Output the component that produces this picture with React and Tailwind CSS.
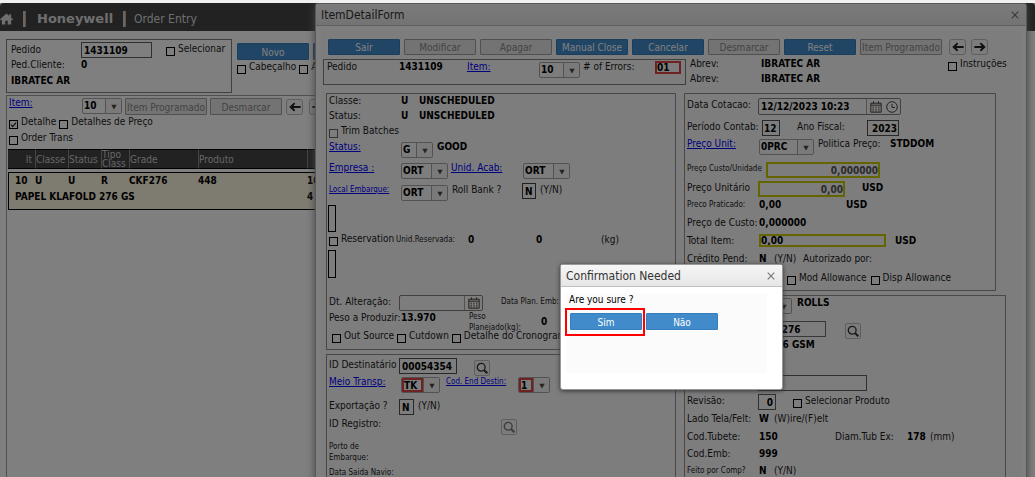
import React from "react";

function Txt({ children, bold, small, className = "" }) {
  return (
    <span className={`whitespace-nowrap leading-[14px] ${bold ? "font-bold text-black" : "text-[#1c1c1c]"} ${small ? "text-[8px]" : ""} ${className}`}>
      {children}
    </span>
  );
}

function Label({ htmlFor, children, small, className = "" }) {
  return (
    <label htmlFor={htmlFor} className={`whitespace-nowrap leading-[14px] text-[#1c1c1c] ${small ? "text-[8px]" : ""} ${className}`}>
      {children}
    </label>
  );
}

function Link({ children, small }) {
  return (
    <a href="#" className={`whitespace-nowrap leading-[14px] text-[#0000ff] underline ${small ? "text-[8px]" : ""}`}>
      {children}
    </a>
  );
}

function Check({ children, checked, disabled }) {
  return (
    <label className="flex items-start gap-[3px] whitespace-nowrap leading-[14px] text-[#1c1c1c]">
      <span className="relative mt-[5px] flex h-[9px] w-[9px] shrink-0">
        <input type="checkbox" defaultChecked={checked} disabled={disabled} className={`h-[9px] w-[9px] appearance-none border ${disabled ? "border-[#666666]" : "border-black"}`} />
        {checked && (
          <svg viewBox="0 0 9 9" className="pointer-events-none absolute inset-0 h-[9px] w-[9px]">
            <path d="M2 4.8 3.7 6.6 7 2.6" fill="none" stroke="#222" strokeWidth="1.3" />
          </svg>
        )}
      </span>
      {children}
    </label>
  );
}

function Combo({ value, label, id, className = "", error }) {
  return (
    <span className={`mt-[2px] flex h-4 overflow-hidden rounded-[2px] border border-[#a4a4a4] ${className}`}>
      <select id={id} aria-label={label} className={`min-w-0 flex-1 appearance-none font-bold leading-[12px] text-black ${error ? "border-2 border-[#e04444]" : "pl-px"}`}>
        <option>{value}</option>
      </select>
      <span className="flex w-4 shrink-0 items-center justify-center border-l border-[#a4a4a4] bg-[#f4f4f4]">
        <svg viewBox="0 0 6 6" className="mt-[2px] h-[6px] w-[6px]">
          <path d="M.3.8h5.4L3 5.6z" fill="#54483f" />
        </svg>
      </span>
    </span>
  );
}

function Field({ value, label, id, className = "" }) {
  return (
    <input id={id} aria-label={label} defaultValue={value} className={`h-4 min-w-0 border font-bold text-black ${className}`} />
  );
}

function Btn({ children, disabled, label, className = "" }) {
  return (
    <button
      disabled={disabled}
      aria-label={label}
      className={`flex w-[72px] shrink-0 items-center justify-center overflow-hidden whitespace-nowrap rounded-[1px] border pt-[2px] leading-[14px] ${disabled ? "border-[#a0a0a0] bg-[#e6e6e6] text-[#888888]" : "border-[#357ebd] bg-[#428bca] text-white"} ${className}`}
    >
      {children}
    </button>
  );
}

function ArrowBtn({ right }) {
  return (
    <button aria-label={right ? "Próximo" : "Anterior"} className="flex h-4 w-[17px] shrink-0 items-center justify-center rounded-[3px] border border-[#bcbcbc] bg-[#f8f8f8]">
      <svg viewBox="0 0 12 10" className={`h-[10px] w-3 ${right ? "rotate-180" : ""}`}>
        <path d="M.3 5 5 .6 6.2 1.8 4.4 3.9h7.2v2.2H4.4l1.8 2.1L5 9.4z" fill="#222" />
      </svg>
    </button>
  );
}

function SearchBtn({ disabled }) {
  return (
    <button aria-label="Pesquisar" disabled={disabled} className={`mt-[2px] flex h-4 w-4 items-center justify-center rounded-[2px] border border-[#bcbcbc] bg-[#f6f6f6] ${disabled ? "text-[#777777]" : "text-[#333333]"}`}>
      <svg viewBox="0 0 12 12" className="h-3 w-3 shrink-0">
        <circle cx="5.2" cy="5.2" r="3.9" fill="none" stroke="currentColor" strokeWidth="1.3" />
        <path d="m8 8 3.3 3.3" stroke="currentColor" strokeWidth="2" />
      </svg>
    </button>
  );
}

function CalendarIcon() {
  return (
    <svg viewBox="0 0 12 12" className="h-3 w-3 shrink-0" fill="none" stroke="#4d443e">
      <path d="M.8 2.2h10.4v9H.8zM1 4.2h10M3.5.4v2.4M8.5.4v2.4" />
      <path d="M2.5 6.2h7M2.5 8.2h7M2.5 10h7" strokeDasharray="1.4 1.4" />
    </svg>
  );
}

function ClockIcon() {
  return (
    <svg viewBox="0 0 12 12" className="h-3 w-3 shrink-0" fill="none" stroke="#4d443e">
      <circle cx="6" cy="6" r="5.3" />
      <path d="M6 3v3.5h3" />
    </svg>
  );
}

const panel = "border border-[#909090]";

function OrderPage() {
  return (
    <div className="h-full rounded-t-[4px] bg-white">
      <header className="flex h-7 items-center rounded-t-[4px] bg-[#444444] pt-[3px] text-[#dddddd]">
        <svg viewBox="0 0 14 12" className="h-3 w-[13px]">
          <path d="M7 0 0 6.4 1 7.5 2 6.7V12h3.7V8h2.6v4H12V6.7l1 .8 1-1.1-2-1.8V1h-2v1.8z" fill="#dddddd" />
        </svg>
        <span className="ml-[10px] h-4 w-[3px] border-r border-[#e0a060] bg-[#c8d0dc]" />
        <span className="ml-[11px] w-[86px] text-[13px] font-bold [font-family:'DejaVu_Sans',sans-serif]">Honeywell</span>
        <span className="h-4 w-[3px] border-r border-[#e0a060] bg-[#c8d0dc]" />
        <span className="ml-[8px] text-[12px]">Order Entry</span>
      </header>
      <main className="pl-[6px] pr-4 pt-2">
        <div className="flex">
          <section className="h-[54px] w-[226px] border border-[#808080] pl-1 pt-[2px]">
            <div className="grid grid-cols-[70px_85px_auto] items-start">
              <Label htmlFor="pedido" className="mt-px">Pedido</Label>
              <Field id="pedido" value="1431109" className="w-[71px] border-[#606060] px-[2px]" />
              <Check>Selecionar</Check>
            </div>
            <div className="grid grid-cols-[70px_auto]">
              <Txt>Ped.Cliente:</Txt>
              <Txt bold>0</Txt>
            </div>
            <div className="flex pt-[2px]"><Txt bold>IBRATEC AR</Txt></div>
          </section>
          <div className="flex flex-col pl-[5px] pt-1">
            <div className="flex gap-1">
              <Btn className="h-[17px]">Novo</Btn>
              <Btn label="Salvar" className="h-[17px]" />
            </div>
            <div className="flex gap-[3px]">
              <Check>Cabeçalho</Check>
              <Check>A</Check>
            </div>
          </div>
        </div>
        <section className="mt-[2px] border border-[#a0a0a0] pl-px pb-[400px]">
          <div className="grid grid-cols-[73px_43px_85px_76px_23px_auto] items-start pl-px">
            <Link>Item:</Link>
            <Combo value="10" label="Item" className="w-10" />
            <Btn disabled className="mt-[2px] h-[17px] w-[82px]">Item Programado</Btn>
            <Btn disabled className="mt-[2px] h-[17px]">Desmarcar</Btn>
            <span className="mt-[3px]"><ArrowBtn /></span>
            <span className="mt-[3px]"><ArrowBtn right /></span>
          </div>
          <div className="flex h-4 gap-[3px] pl-px">
            <Check checked>Detalhe</Check>
            <Check>Detalhes de Preço</Check>
          </div>
          <div className="flex h-[18px] pl-px"><Check>Order Trans</Check></div>
          <table className="w-full table-fixed border-separate border-spacing-0 text-left">
            <colgroup>
              <col className="w-[27px]" /><col className="w-[33px]" /><col className="w-[33px]" /><col className="w-[28px]" />
              <col className="w-[69px]" /><col className="w-[109px]" /><col />
            </colgroup>
            <thead>
              <tr className="h-5 bg-[#444444] leading-[9px] text-[#cccccc] [&>th]:border-y [&>th]:border-black [&>th]:p-0 [&>th]:font-normal">
                <th className="pr-[3px]! text-right">It</th>
                <th className="border-l border-l-[#888888]!">Classe</th>
                <th className="border-l border-l-[#888888]!">Status</th>
                <th className="border-l border-l-[#888888]!">Tipo Class</th>
                <th className="border-l border-l-[#888888]!">Grade</th>
                <th className="border-l border-l-[#888888]!">Produto</th>
                <th aria-label="Quantidade" className="border-l border-l-[#888888]!" />
              </tr>
            </thead>
            <tbody className="font-bold text-black">
              <tr className="h-[3px]"><td colSpan={7} className="p-0" /></tr>
              <tr className="h-4 bg-[#fdf6e1] leading-[14px] [&>td]:border-t [&>td]:border-black [&>td]:p-0">
                <td className="border-l pl-[6px]!">10</td>
                <td>U</td><td>U</td><td>R</td><td>CKF276</td><td>448</td><td>10</td>
              </tr>
              <tr className="h-[22px] bg-[#fdf6e1] [&>td]:border-b [&>td]:border-black [&>td]:p-0 [&>td]:pb-1">
                <td colSpan={6} className="border-l pl-[6px]!">PAPEL KLAFOLD 276 GS</td>
                <td>4</td>
              </tr>
            </tbody>
          </table>
        </section>
      </main>
    </div>
  );
}

function ProductionPanel() {
  return (
    <section className={`h-[257px] pl-[2px] ${panel}`}>
      <div className="grid h-[15px] grid-cols-[72px_18px_auto]"><Txt>Classe:</Txt><Txt bold>U</Txt><Txt bold>UNSCHEDULED</Txt></div>
      <div className="grid h-[15px] grid-cols-[72px_18px_auto]"><Txt>Status:</Txt><Txt bold>U</Txt><Txt bold>UNSCHEDULED</Txt></div>
      <div className="flex h-4"><Check disabled>Trim Batches</Check></div>
      <div className="grid h-[21px] grid-cols-[72px_36px_auto] items-start">
        <Link>Status:</Link><Combo value="G" label="Status" className="w-8" /><Txt bold>GOOD</Txt>
      </div>
      <div className="grid h-[22px] grid-cols-[72px_50px_72px_auto] items-start">
        <Link>Empresa :</Link><Combo value="ORT" label="Empresa" className="w-[47px]" />
        <Link>Unid. Acab:</Link><Combo value="ORT" label="Unidade de acabamento" className="w-[47px]" />
      </div>
      <div className="grid h-[22px] grid-cols-[72px_51px_70px_18px_auto] items-start">
        <Link small>Local Embarque:</Link><Combo value="ORT" label="Local de embarque" className="w-[47px]" />
        <Label htmlFor="rollbank">Roll Bank ?</Label><Field id="rollbank" value="N" className="w-[14px] border-[#404040] px-[2px]" /><Txt>(Y/N)</Txt>
      </div>
      <div className="-ml-px h-[27px] w-2 border border-black" />
      <div className="grid h-[18px] grid-cols-[67px_72px_68px_65px_auto]">
        <Check>Reservation</Check><Txt small className="pt-px">Unid.Reservada:</Txt><Txt bold className="pt-px">0</Txt><Txt bold className="pt-px">0</Txt><Txt className="pt-px">(kg)</Txt>
      </div>
      <div className="-ml-px mb-[17px] h-7 w-2 border border-black" />
      <div className="grid h-4 grid-cols-[70px_102px_auto]">
        <Label htmlFor="alteracao">Dt. Alteração:</Label>
        <span className="flex h-4 w-[84px] items-center rounded-[2px] border border-[#808080]">
          <input id="alteracao" className="h-full w-[65px] border-r border-[#a4a4a4]" />
          <span className="flex flex-1 justify-center"><CalendarIcon /></span>
        </span>
        <Txt small>Data Plan. Emb:</Txt>
      </div>
      <div className="grid h-[18px] grid-cols-[72px_68px_72px_auto] items-start">
        <Txt>Peso a Produzir:</Txt><Txt bold>13.970</Txt>
        <span className="w-12 text-[8px] leading-[11px] text-[#1c1c1c]">Peso Planejado(kg):</span>
        <Txt bold className="mt-1">0</Txt>
      </div>
      <div className="flex gap-[3px] pl-[3px]">
        <Check>Out Source</Check><Check>Cutdown</Check><Check>Detalhe do Cronograma</Check>
      </div>
    </section>
  );
}

function ShippingPanel() {
  return (
    <section className={`mt-1 h-[200px] pl-[2px] pt-[3px] ${panel}`}>
      <div className="grid h-[17px] grid-cols-[70px_75px_auto] items-start">
        <Label htmlFor="destinatario">ID Destinatário</Label><Field id="destinatario" value="00054354" className="w-[58px] border-[#505050] px-[2px]" /><SearchBtn />
      </div>
      <div className="grid h-6 grid-cols-[72px_45px_72px_auto] items-start">
        <Link>Meio Transp:</Link><Combo error value="TK" label="Meio de transporte" className="w-[39px]" />
        <Link small>Cod. End Destin:</Link><Combo error value="1" label="Código do endereço" className="w-8" />
      </div>
      <div className="grid h-[18px] grid-cols-[70px_19px_auto] items-start">
        <Label htmlFor="exportacao">Exportação ?</Label><Field id="exportacao" value="N" className="w-[15px] border-[#505050] px-[2px]" /><Txt>(Y/N)</Txt>
      </div>
      <div className="grid h-6 grid-cols-[172px_auto] items-start"><Txt>ID Registro:</Txt><SearchBtn disabled /></div>
      <p className="h-6 w-12 text-[8px] leading-[11px] text-[#1c1c1c]">Porto de Embarque:</p>
      <Txt small>Data Saida Navio:</Txt>
    </section>
  );
}

const yellow = "border-2 border-[#c8c800]";

function PricePanel() {
  return (
    <section className={`h-[198px] w-[312px] pl-[2px] pt-1 ${panel}`}>
      <div className="grid h-[22px] grid-cols-[71px_auto] items-start">
        <Label htmlFor="cotacao">Data Cotacao:</Label>
        <span className="flex h-[17px] w-[143px] items-center rounded-[2px] border border-[#808080]">
          <input id="cotacao" defaultValue="12/12/2023 10:23" className="h-full w-[108px] border-r border-[#a4a4a4] pl-[2px] font-bold text-black" />
          <span className="flex flex-1 justify-center gap-[4px]"><CalendarIcon /><ClockIcon /></span>
        </span>
      </div>
      <div className="grid h-[17px] grid-cols-[75px_35px_70px_auto] items-start">
        <Label htmlFor="periodo">Período Contab:</Label><Field id="periodo" value="12" className="w-[18px] border-[#505050] px-px" />
        <Label htmlFor="ano">Ano Fiscal:</Label><Field id="ano" value="2023" className="w-8 border-[#505050] px-px text-right" />
      </div>
      <div className="grid h-[25px] grid-cols-[72px_59px_72px_auto] items-start">
        <Link>Preço Unit:</Link><Combo value="0PRC" label="Preço unitário" className="w-[55px]" /><Txt>Politica Preço:</Txt><Txt bold>STDDOM</Txt>
      </div>
      <div className="grid h-[19px] grid-cols-[79px_auto] items-start">
        <Label small htmlFor="custo">Preço Custo/Unidade</Label>
        <input id="custo" defaultValue="0,000000" className={`h-4 w-[114px] text-right font-bold text-[#555555] ${yellow}`} />
      </div>
      <div className="grid h-[17px] grid-cols-[71px_104px_auto] items-start">
        <Label htmlFor="unitario">Preço Unitário</Label>
        <input id="unitario" defaultValue="0,00" className={`h-4 w-[87px] text-right font-bold text-[#555555] ${yellow}`} />
        <Txt bold>USD</Txt>
      </div>
      <div className="grid h-[18px] grid-cols-[72px_87px_auto]"><Txt small>Preco Praticado:</Txt><Txt bold>0,00</Txt><Txt bold>USD</Txt></div>
      <div className="grid h-[18px] grid-cols-[72px_auto]"><Txt>Preço de Custo:</Txt><Txt bold>0,000000</Txt></div>
      <div className="grid h-[18px] grid-cols-[72px_136px_auto] items-start">
        <Label htmlFor="total">Total Item:</Label>
        <input id="total" defaultValue="0,00" className={`h-[13px] w-[127px] font-bold leading-[9px] text-black ${yellow}`} />
        <Txt bold>USD</Txt>
      </div>
      <div className="grid h-[19px] grid-cols-[72px_15px_29px_auto]"><Txt>Crédito Pend:</Txt><Txt bold>N</Txt><Txt>(Y/N)</Txt><Txt>Autorizado por:</Txt></div>
      <div className="flex gap-1 pl-[100px]"><Check>Mod Allowance</Check><Check>Disp Allowance</Check></div>
    </section>
  );
}

function ProductPanel() {
  return (
    <section className={`mt-1 h-[260px] w-[322px] pl-[2px] ${panel}`}>
      <div className="grid h-[25px] grid-cols-[72px_38px_auto] items-start">
        <Txt>Unidade:</Txt><Combo value="R" label="Unidade" className="w-[33px]" /><Txt bold>ROLLS</Txt>
      </div>
      <div className="grid h-[17px] grid-cols-[71px_87px_auto] items-start">
        <Label htmlFor="grade">Grade:</Label><Field id="grade" value="CKF276" className="w-[68px] border-[#707070] px-[3px]" /><SearchBtn />
      </div>
      <div className="flex h-[37px] pl-[83px]"><Txt bold>276 GSM</Txt></div>
      <div className="grid h-[19px] grid-cols-[71px_auto] items-start">
        <Label htmlFor="produto">Produto:</Label><Field id="produto" className="w-[109px] border-[#606060] px-[3px]" />
      </div>
      <div className="grid h-[18px] grid-cols-[71px_35px_auto] items-start">
        <Label htmlFor="revisao">Revisão:</Label><Field id="revisao" value="0" className="w-[18px] border-[#606060] px-[2px] text-right" /><Check>Selecionar Produto</Check>
      </div>
      <div className="grid h-[18px] grid-cols-[72px_15px_auto]"><Txt>Lado Tela/Felt:</Txt><Txt bold>W</Txt><Txt>(W)ire/(F)elt</Txt></div>
      <div className="grid h-[17px] grid-cols-[72px_76px_72px_23px_auto]">
        <Txt>Cod.Tubete:</Txt><Txt bold>150</Txt><Txt>Diam.Tub Ex:</Txt><Txt bold>178</Txt><Txt>(mm)</Txt>
      </div>
      <div className="grid h-[17px] grid-cols-[72px_auto]"><Txt>Cod.Emb:</Txt><Txt bold>999</Txt></div>
      <div className="grid grid-cols-[72px_15px_auto]"><Txt small>Feito por Comp?</Txt><Txt bold>N</Txt><Txt>(Y/N)</Txt></div>
    </section>
  );
}

function TitleBar({ children }) {
  return (
    <header className="flex h-[22px] items-center justify-between border-b border-[#c0c0c0] bg-linear-to-b from-[#f6f6f6] to-[#e6e6e6] pl-[5px] pr-[3px] pt-px text-[12px] text-[#333333]">
      <h2 className="whitespace-nowrap">{children}</h2>
      <button aria-label="Fechar" className="flex h-4 w-4 items-center justify-center">
        <svg viewBox="0 0 8 8" className="h-2 w-2"><path d="m.7.7 6.6 6.6M7.3.7.7 7.3" stroke="#777" strokeWidth="1.2" /></svg>
      </button>
    </header>
  );
}

function ItemDetailForm() {
  return (
    <div className="absolute -bottom-20 left-[315px] right-2 top-0 overflow-hidden rounded-t-[3px] border border-[#b0b0b0] bg-white shadow-[0_0_8px_#888888]">
      <TitleBar>ItemDetailForm</TitleBar>
      <div className="px-[5px] pt-[5px]">
        <div className="bg-[#fafafa] pt-2">
          <div className="flex h-4 gap-1 pl-[7px]">
            <Btn>Sair</Btn><Btn disabled>Modificar</Btn><Btn disabled>Apagar</Btn><Btn>Manual Close</Btn><Btn>Cancelar</Btn>
            <Btn disabled>Desmarcar</Btn><Btn>Reset</Btn><Btn disabled className="w-[82px]">Item Programado</Btn>
            <span className="ml-[3px] flex gap-[5px]"><ArrowBtn /><ArrowBtn right /></span>
          </div>
          <div className="flex items-start gap-1 pl-[2px] pt-[2px]">
            <div className="mt-[2px] grid h-[26px] w-[363px] grid-cols-[72px_68px_72px_44px_72px_auto] items-start border border-[#808080] pl-[3px]">
              <Txt>Pedido</Txt><Txt bold>1431109</Txt><Link>Item:</Link><Combo value="10" label="Item do formulário" className="w-[41px]" />
              <Label htmlFor="errors"># of Errors:</Label>
              <input id="errors" defaultValue="01" className="mt-px h-[13px] w-[26px] border-2 border-[#e04444] font-bold leading-[9px] text-black" />
            </div>
            <div className="grid grid-cols-[71px_187px_auto] gap-y-px">
              <Txt>Abrev:</Txt><Txt bold>IBRATEC AR</Txt><Check>Instruções</Check>
              <Txt>Abrev:</Txt><Txt bold>IBRATEC AR</Txt>
            </div>
          </div>
          <div className="flex gap-2 pl-[5px] pt-[7px]">
            <div className="w-[350px] shrink-0"><ProductionPanel /><ShippingPanel /></div>
            <div><PricePanel /><ProductPanel /></div>
          </div>
        </div>
      </div>
    </div>
  );
}

function Confirmation() {
  return (
    <div role="dialog" aria-label="Confirmation Needed" className="absolute left-[560px] top-[261px] h-[126px] w-[223px] rounded-[3px] border border-[#999999] bg-white shadow-[0_1px_4px_#333333]">
      <TitleBar>Confirmation Needed</TitleBar>
      <div className="ml-[5px] mr-[15px] mt-[6px] h-20 bg-[#fbfbfb] pl-[3px]">
        <p className="leading-[14px] text-black">Are you sure ?</p>
        <div className="flex gap-1 pl-px pt-[6px]">
          <span className="relative flex">
            <Btn className="h-[17px]">Sim</Btn>
            <span className="pointer-events-none absolute -bottom-[6px] -left-[5px] -right-[3px] -top-[5px] border-2 border-[#ff0000]" />
          </span>
          <Btn className="h-[17px]">Não</Btn>
        </div>
      </div>
    </div>
  );
}

export default function App() {
  return (
    <div className="h-screen overflow-hidden bg-[#f0f0f0] pt-[3px] text-[10px] leading-[14px] [font-family:'DejaVu_Sans_Condensed','DejaVu_Sans',sans-serif]">
      <div className="relative h-full overflow-hidden">
        <OrderPage />
        <ItemDetailForm />
        <div className="absolute inset-0 bg-black/50" />
        <Confirmation />
      </div>
    </div>
  );
}
